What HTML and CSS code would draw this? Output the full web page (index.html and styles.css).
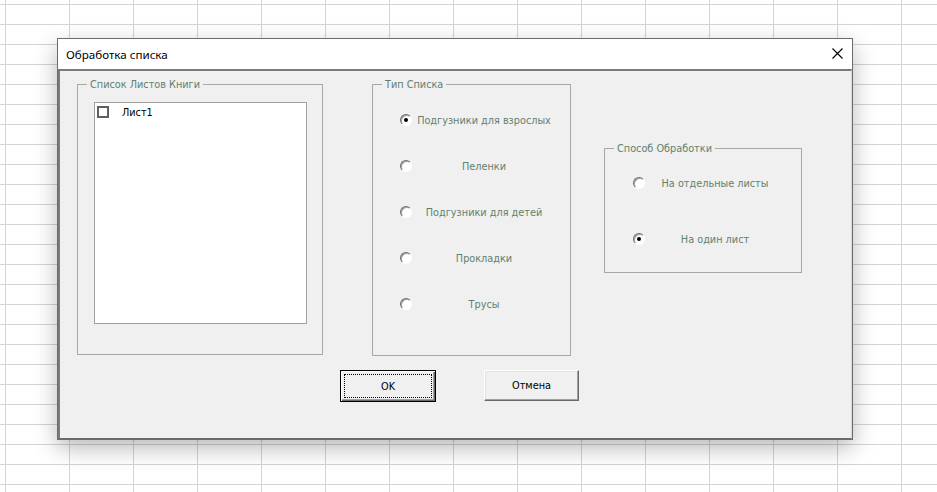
FILE: index.html
```html
<!DOCTYPE html>
<html lang="ru">
<head>
<meta charset="utf-8">
<title>Обработка списка</title>
<link rel="stylesheet" href="styles.css">
</head>
<body>
<div class="dialog">
  <div class="titlebar">
    <span class="title">Обработка списка</span>
    <svg class="close" width="11" height="11" viewBox="0 0 11 11"><path d="M0.5 0.5 L10.5 10.5 M10.5 0.5 L0.5 10.5" stroke="#000" stroke-width="1.1" fill="none"/></svg>
  </div>
  <div class="client">
    <div class="frames">
      <div class="frame frame-sheets">
        <div class="legend">Список Листов Книги</div>
        <div class="listbox">
          <div class="list-item"><span class="checkbox"></span><span class="item-text">Лист1</span></div>
        </div>
      </div>
      <div class="frame frame-type">
        <div class="legend">Тип Списка</div>
        <div class="options type-options">
          <div class="option"><span class="radio checked"></span><span class="opt-label">Подгузники для взрослых</span></div>
          <div class="option"><span class="radio"></span><span class="opt-label">Пеленки</span></div>
          <div class="option"><span class="radio"></span><span class="opt-label">Подгузники для детей</span></div>
          <div class="option"><span class="radio"></span><span class="opt-label">Прокладки</span></div>
          <div class="option"><span class="radio"></span><span class="opt-label">Трусы</span></div>
        </div>
      </div>
      <div class="frame frame-mode">
        <div class="legend">Способ Обработки</div>
        <div class="options mode-options">
          <div class="option"><span class="radio"></span><span class="opt-label">На отдельные листы</span></div>
          <div class="option"><span class="radio checked"></span><span class="opt-label">На один лист</span></div>
        </div>
      </div>
    </div>
    <div class="buttons">
      <button class="btn btn-default"><span class="focus">OK</span></button>
      <button class="btn btn-cancel">Отмена</button>
    </div>
  </div>
</div>
</body>
</html>
```
FILE: styles.css
```css
html, body {
  margin: 0;
  padding: 0;
}
body {
  width: 937px;
  height: 492px;
  overflow: hidden;
  background-color: #ffffff;
  background-image:
    linear-gradient(to right, #d4d4d4 1px, transparent 1px),
    linear-gradient(to bottom, #d4d4d4 1px, transparent 1px);
  background-size: 64px 20px;
  background-position: 5px 4px;
  font-family: "DejaVu Sans Condensed", "DejaVu Sans", sans-serif;
  font-stretch: condensed;
  font-size: 10.8px;
  color: #000;
}
.dialog {
  box-sizing: border-box;
  margin: 38px 0 0 57px;
  width: 796px;
  height: 402px;
  border: 1px solid #6c6c6c;
  background: #f0f0f0;
  box-shadow: 0 8px 22px rgba(0, 0, 0, 0.28);
  display: flex;
  flex-direction: column;
}
.titlebar {
  height: 30px;
  background: #ffffff;
  display: flex;
  align-items: center;
  justify-content: space-between;
  padding: 0 9px 0 8px;
  flex: none;
}
.title {
  font-family: "Noto Sans", "Open Sans", sans-serif;
  font-stretch: normal;
  font-size: 11.6px;
  color: #000;
}
.close {
  margin-top: -2px;
}
.client {
  flex: 1;
  border-top: 2px solid #7a7a7a;
  border-left: 2px solid #7a7a7a;
  border-bottom: 1px solid #6a6a6a;
  border-right: 1px solid #d8d8d8;
  padding: 13px 0 0 17px;
  background: #f0f0f0;
}
.frames {
  display: flex;
  align-items: flex-start;
}
.frame {
  box-sizing: border-box;
  border: 1px solid #a7a7a7;
}
.legend {
  width: fit-content;
  margin: -7px 0 0 9px;
  padding: 0 3px;
  line-height: 13px;
  height: 13px;
  background: #f0f0f0;
  color: #62806f;
  white-space: nowrap;
}
.frame-sheets {
  width: 246px;
  height: 271px;
}
.frame-type {
  width: 199px;
  height: 272px;
  margin-left: 49px;
}
.frame-mode {
  width: 198px;
  height: 125px;
  margin-left: 33px;
  margin-top: 64px;
}
.listbox {
  box-sizing: border-box;
  margin: 11px 0 0 16px;
  width: 213px;
  height: 222px;
  background: #ffffff;
  border: 1px solid #a0a0a0;
  padding: 2px 0 0 2px;
}
.list-item {
  display: flex;
  align-items: center;
  height: 14px;
}
.checkbox {
  box-sizing: border-box;
  width: 12px;
  height: 12px;
  border: 2px solid #5f5f5f;
  background: #fff;
  flex: none;
}
.item-text {
  margin-left: 13px;
  color: #000;
}
.options {
  display: flex;
  flex-direction: column;
}
.type-options {
  margin-top: 19px;
  padding-left: 27px;
  gap: 26px;
}
.mode-options {
  margin-top: 18px;
  padding-left: 28px;
  gap: 36px;
}
.option {
  display: flex;
  align-items: center;
  height: 20px;
}
.radio {
  box-sizing: border-box;
  width: 12px;
  height: 12px;
  border-radius: 50%;
  background: #ffffff;
  border: 1px solid;
  border-color: #6d6d6d #ffffff #ffffff #6d6d6d;
  box-shadow: inset 1px 1px 0 #a0a0a0;
  flex: none;
  display: flex;
  align-items: center;
  justify-content: center;
}
.radio.checked::after {
  content: "";
  width: 4px;
  height: 4px;
  border-radius: 50%;
  background: #000;
}
.opt-label {
  color: #62806f;
  text-align: center;
  white-space: nowrap;
}
.type-options .opt-label {
  margin-left: 2px;
  width: 140px;
}
.mode-options .opt-label {
  margin-left: 3px;
  width: 134px;
}
.buttons {
  display: flex;
  align-items: flex-start;
  margin-top: 14px;
  padding-left: 263px;
  gap: 48px;
}
.btn {
  box-sizing: border-box;
  font-family: inherit;
  font-stretch: condensed;
  font-size: 10.8px;
  color: #000;
  background: #f0f0f0;
  padding: 0;
  margin: 0;
  cursor: default;
}
.btn-default {
  width: 96px;
  height: 32px;
  border: 1px solid #000;
  box-shadow: inset 1px 1px 0 #ffffff, inset -1px -1px 0 #6a6a6a, inset -2px -2px 0 #a0a0a0;
  padding: 3px;
  display: flex;
}
.focus {
  flex: 1;
  display: flex;
  align-items: center;
  justify-content: center;
  border: 1px dotted #000;
}
.btn-cancel {
  width: 95px;
  height: 31px;
  border: 1px solid;
  border-color: #ffffff #6a6a6a #6a6a6a #ffffff;
  box-shadow: inset -1px -1px 0 #a0a0a0, inset 1px 1px 0 #e3e3e3;
}
```
